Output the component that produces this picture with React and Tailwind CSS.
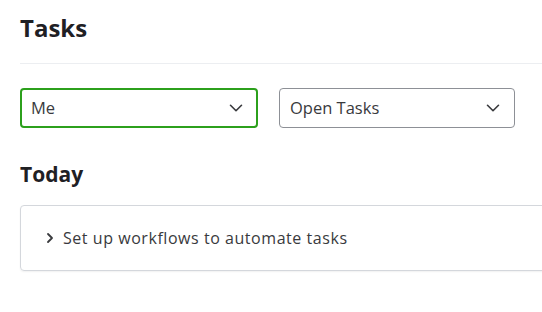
import { ChevronDown, ChevronRight } from 'lucide-react'

export default function App() {
  return (
    <div className="w-[542px] h-[312px] overflow-hidden bg-white font-['Open_Sans',sans-serif] text-[#393a3d]">
      <div className="pl-5 pt-[13px]">
        <h1 className="text-[24px] font-bold leading-[30px] text-[#1f2024]">Tasks</h1>
        <div className="mt-[20px] h-px bg-[#eceef1]" />

        {/* Filters */}
        <div className="mt-6 flex gap-[21px]">
          <div className="w-[238px] h-[40px] rounded-[4px] border-2 border-[#2ca01c] flex items-center justify-between pl-[9px] pr-[9px]">
            <span className="text-[16.5px] text-[#393a3d]">Me</span>
            <ChevronDown size={22} strokeWidth={1.75} className="text-[#393a3d]" />
          </div>
          <div className="w-[236px] h-[40px] rounded-[4px] border border-[#8d9096] flex items-center justify-between pl-[10px] pr-[10px]">
            <span className="text-[16.5px] text-[#393a3d]">Open Tasks</span>
            <ChevronDown size={22} strokeWidth={1.75} className="text-[#393a3d]" />
          </div>
        </div>

        <h2 className="mt-[34px] text-[21px] font-bold leading-[24px] text-[#1f2024]">Today</h2>

        <div className="mt-[19px] w-[560px] h-[66px] rounded-[4px] border border-[#d4d7dc] flex items-center pl-[21px] gap-[5px] shadow-[0_1px_2px_rgba(0,0,0,0.06)]">
          <ChevronRight size={16} strokeWidth={2.75} className="text-[#393a3d]" />
          <span className="text-[16px] tracking-[0.55px] text-[#393a3d]">Set up workflows to automate tasks</span>
        </div>
      </div>
    </div>
  )
}
